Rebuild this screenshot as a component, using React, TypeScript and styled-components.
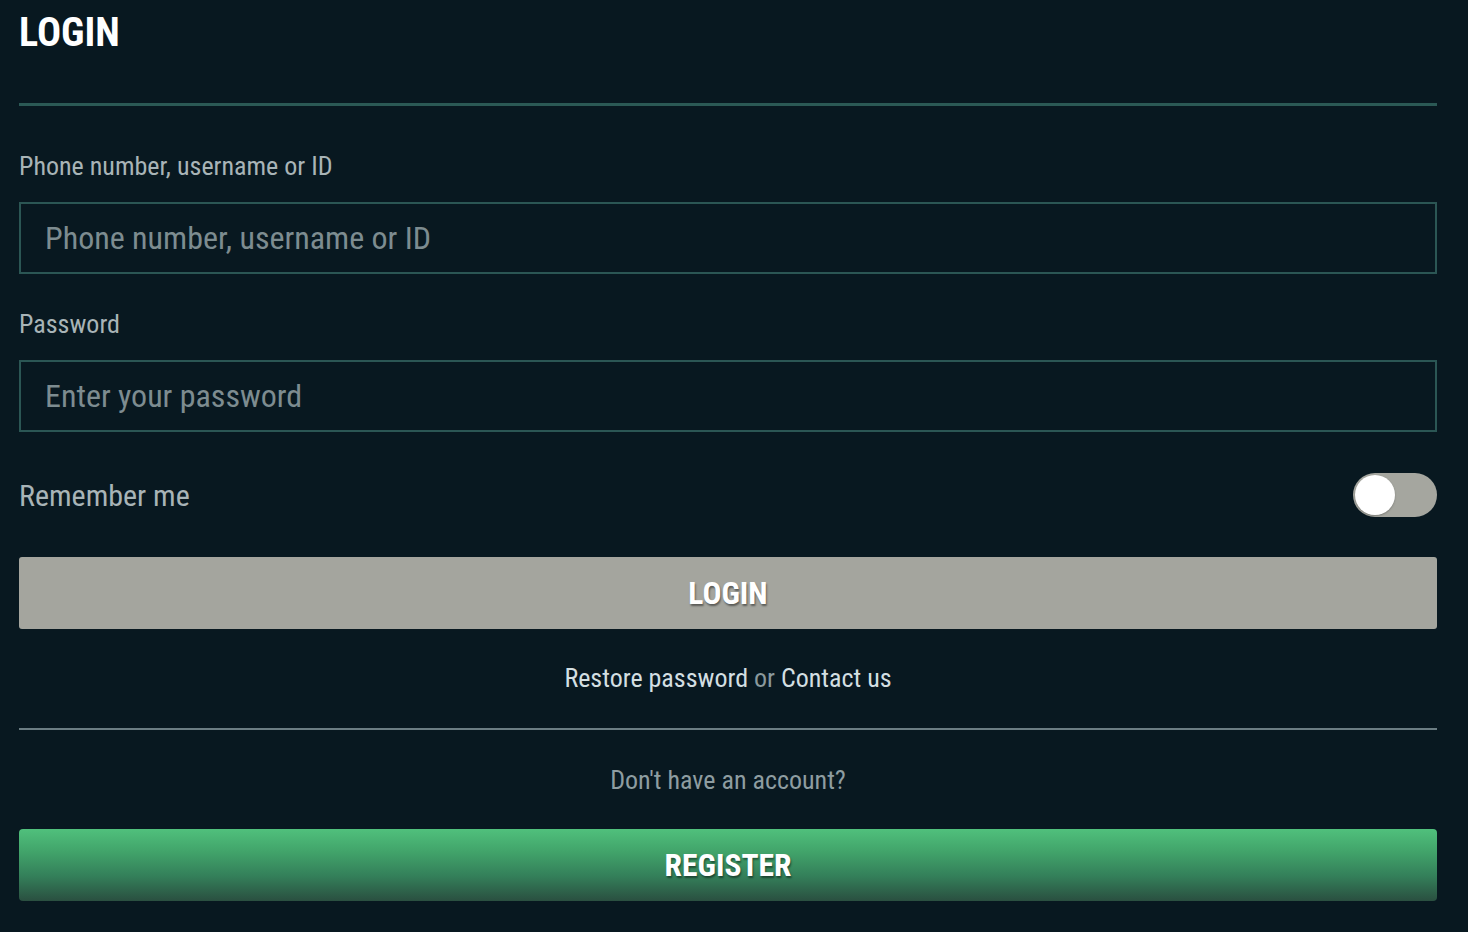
import React, { useState } from "react";
import styled, { createGlobalStyle } from "styled-components";

const GlobalStyle = createGlobalStyle`
  html, body {
    margin: 0;
    padding: 0;
    background: #081820;
  }
  body {
    font-family: "Roboto Condensed", "Liberation Sans Narrow", Roboto, sans-serif;
  }
  * {
    box-sizing: border-box;
  }
`;

const Page = styled.div`
  width: 1468px;
  min-height: 932px;
  background: #081820;
  padding: 8px 31px 0 19px;
  display: flex;
  flex-direction: column;
`;

const Title = styled.h1`
  margin: 0;
  font-size: 40px;
  font-weight: 700;
  color: #ffffff;
  line-height: 50px;
`;

const Rule = styled.hr<{ $color: string; $size: number }>`
  border: none;
  margin: 0;
  height: ${(p) => p.$size}px;
  background: ${(p) => p.$color};
`;

const Field = styled.label`
  display: flex;
  flex-direction: column;
  gap: 21px;
`;

const FieldLabel = styled.span`
  font-size: 26px;
  color: #a8b4b7;
  line-height: 29px;
`;

const Input = styled.input`
  height: 72px;
  width: 100%;
  background: transparent;
  border: 2px solid #2b5654;
  padding: 0 24px;
  font-family: inherit;
  font-size: 32px;
  color: #e4ecee;
  outline: none;
  &::placeholder {
    color: #7d8c90;
  }
`;

const Form = styled.form`
  display: flex;
  flex-direction: column;
`;

const Row = styled.div`
  display: flex;
  align-items: center;
  justify-content: space-between;
  height: 44px;
`;

const RememberText = styled.span`
  font-size: 30px;
  color: #a8b4b7;
`;

const Track = styled.button<{ $on: boolean }>`
  width: 84px;
  height: 44px;
  border-radius: 22px;
  border: none;
  padding: 2px;
  background: ${(p) => (p.$on ? "#4cb877" : "#a5a69f")};
  display: flex;
  justify-content: ${(p) => (p.$on ? "flex-end" : "flex-start")};
  cursor: pointer;
`;

const Knob = styled.span`
  width: 40px;
  height: 40px;
  border-radius: 50%;
  background: #ffffff;
  box-shadow: 0 1px 2px rgba(0, 0, 0, 0.25);
`;

const Button = styled.button<{ $variant: "grey" | "green" }>`
  height: 72px;
  width: 100%;
  border: none;
  border-radius: ${(p) => (p.$variant === "green" ? 4 : 3)}px;
  background: ${(p) =>
    p.$variant === "green"
      ? "linear-gradient(to bottom, #50c07c 0%, #42a56b 30%, #34805a 65%, #2a4f40 100%)"
      : "#a4a59e"};
  font-family: inherit;
  font-size: 31.5px;
  font-weight: 700;
  color: #ffffff;
  text-shadow: 1px 2px 2px rgba(0, 0, 0, 0.45);
  cursor: pointer;
`;

const LinksLine = styled.p`
  margin: 0;
  text-align: center;
  font-size: 26px;
  color: #8a999d;
  line-height: 32px;
`;

const Link = styled.a`
  color: #d3dfe2;
  text-decoration: none;
`;

const Muted = styled.p`
  margin: 0;
  text-align: center;
  font-size: 26px;
  color: #8e9da1;
  line-height: 32px;
`;

const Spacer = styled.div<{ $h: number }>`
  height: ${(p) => p.$h}px;
  flex-shrink: 0;
`;

export default function App() {
  const [remember, setRemember] = useState(false);
  return (
    <>
      <GlobalStyle />
      <Page>
        <Title>LOGIN</Title>
        <Spacer $h={45} />
        <Rule $color="#2b5955" $size={3} />
        <Spacer $h={46} />
        <Form onSubmit={(e) => e.preventDefault()}>
          <Field>
            <FieldLabel>Phone number, username or ID</FieldLabel>
            <Input placeholder="Phone number, username or ID" />
          </Field>
          <Spacer $h={36} />
          <Field>
            <FieldLabel>Password</FieldLabel>
            <Input type="password" placeholder="Enter your password" />
          </Field>
          <Spacer $h={41} />
          <Row>
            <RememberText>Remember me</RememberText>
            <Track type="button" $on={remember} onClick={() => setRemember(!remember)}>
              <Knob />
            </Track>
          </Row>
          <Spacer $h={40} />
          <Button type="submit" $variant="grey">
            LOGIN
          </Button>
        </Form>
        <Spacer $h={33} />
        <LinksLine>
          <Link href="#">Restore password</Link> or <Link href="#">Contact us</Link>
        </LinksLine>
        <Spacer $h={34} />
        <Rule $color="#6b7d83" $size={2} />
        <Spacer $h={34} />
        <Muted>Don't have an account?</Muted>
        <Spacer $h={33} />
        <Button type="button" $variant="green">
          REGISTER
        </Button>
      </Page>
    </>
  );
}
